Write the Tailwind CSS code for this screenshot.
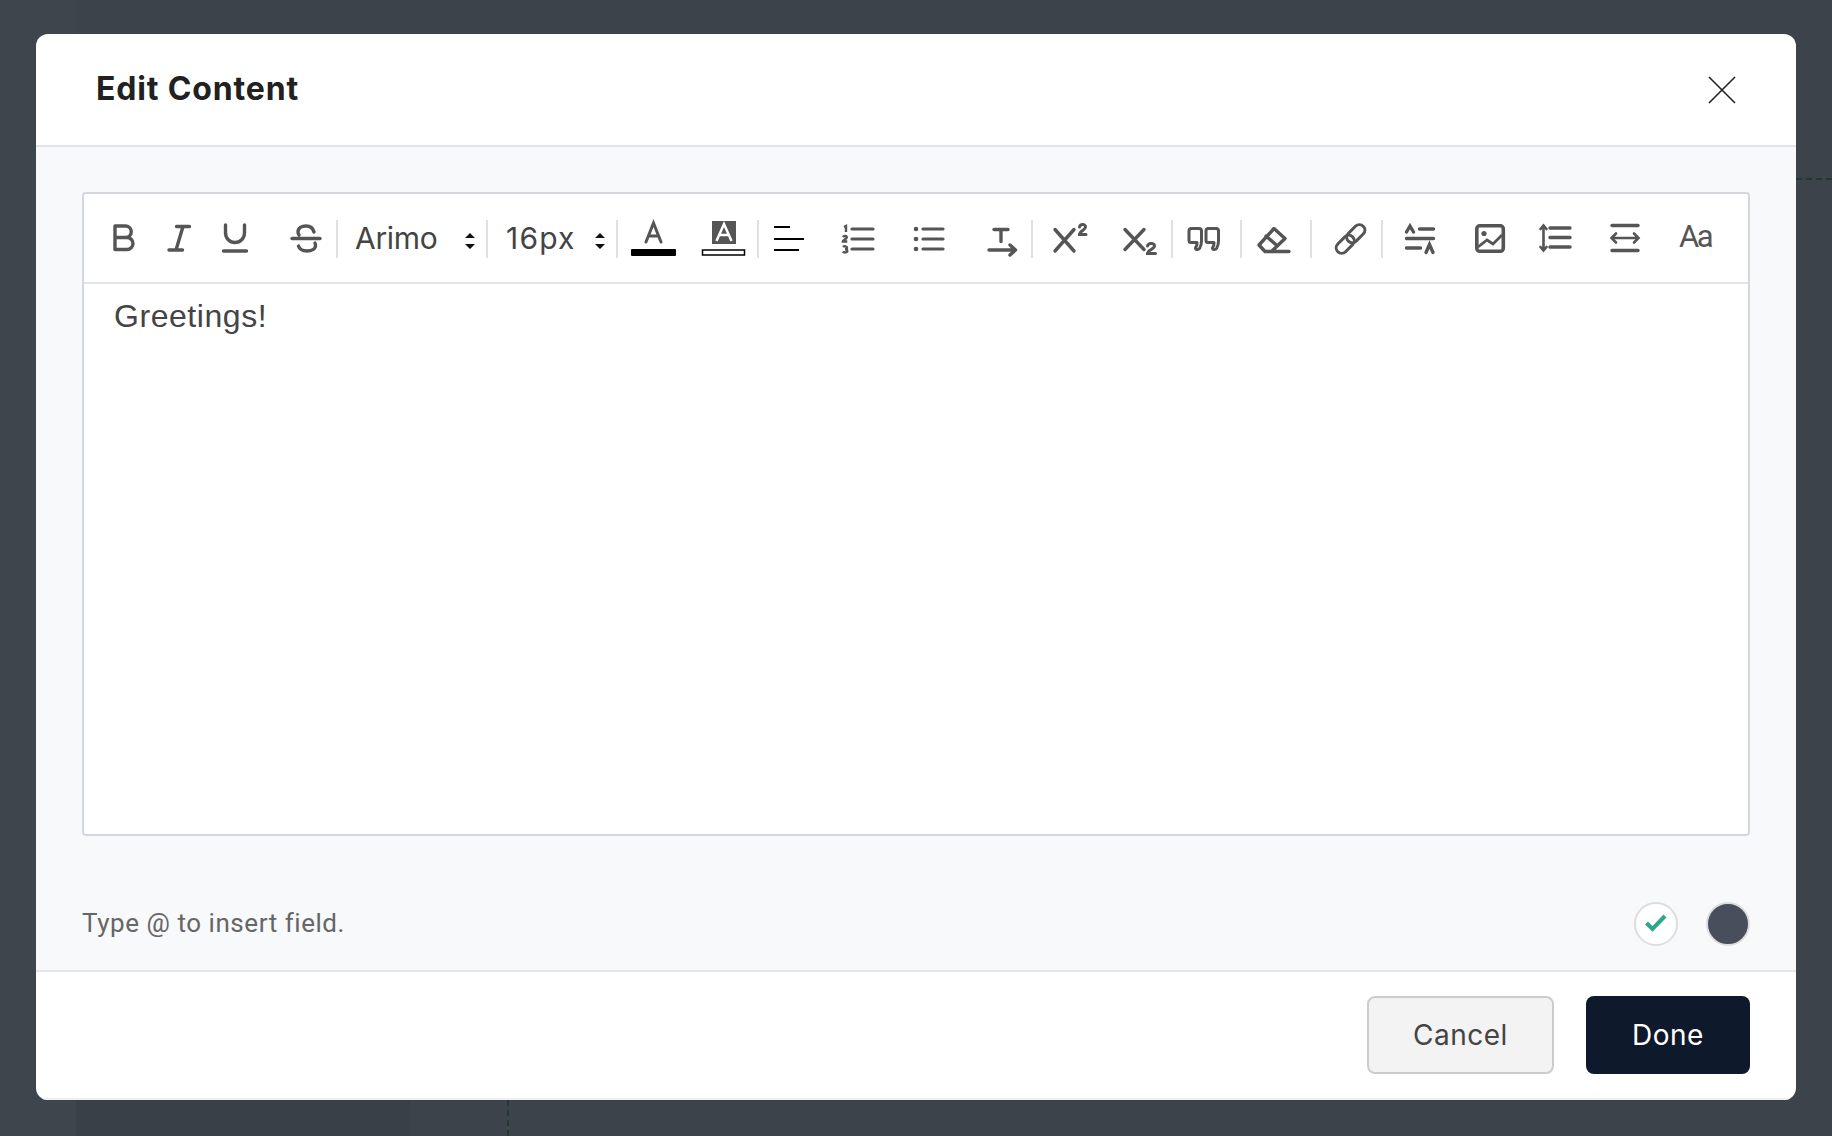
<!DOCTYPE html>
<html lang="en">
<head>
    <meta charset="UTF-8">
    <title>Edit Content</title>
    <script src="https://cdn.jsdelivr.net/npm/@tailwindcss/browser@4"></script>
</head>
<body class="relative w-[1832px] h-[1136px] overflow-hidden bg-[#3c434a] font-['Inter',sans-serif]">

    <!-- page behind the dialog -->
    <div class="flex h-full">
        <div class="w-[76px] bg-[#3d464d]"></div>
        <div class="flex-1 flex flex-col">
            <div class="h-[180px] border-b-2 border-dashed border-[#1f3a30]"></div>
            <div class="flex-1 flex">
                <div class="w-[334px] bg-[#3a4048]"></div>
                <div class="w-0 border-l-2 border-dashed border-[#1f3a30] mt-[920px] ml-[97px]"></div>
            </div>
        </div>
    </div>

    <!-- dialog -->
    <div class="absolute left-[36px] top-[34px] w-[1760px] h-[1066px] bg-white rounded-xl overflow-hidden flex flex-col">
        <header class="h-[113px] shrink-0 border-b-2 border-[#e1e3e8] flex items-center justify-between pl-[60px] pr-[60px]">
            <h1 class="text-[32px] font-bold tracking-[0.85px] text-[#212121] -mt-[2px]">Edit Content</h1>
            <button class="block">
                <svg width="28" height="28" viewBox="0 0 28 28" fill="none" stroke="#222" stroke-width="1.6"><path d="M1 1l26 26M27 1L1 27"/></svg>
            </button>
        </header>

        <div class="flex-1 bg-[#f8f9fb] px-[46px] pt-[45px] flex flex-col">
            <div class="h-[644px] bg-white border-2 border-[#d4d7e0] rounded-[4px] flex flex-col">
                <div class="h-[90px] shrink-0 border-b-2 border-[#e3e4e8] flex items-start pt-[20px]">
                    <svg class="ml-[26px]" width="30" height="44" viewBox="110 214 30 44" fill="none" stroke="#555" stroke-width="3.400" stroke-linejoin="round"><path d="M115 226h10.500a5.750 5.750 0 0 1 0 11.500H115zM115 237.500h12a6 6 0 0 1 0 12h-12z"/></svg>
                    <svg class="ml-[24px]" width="28" height="44" viewBox="164 214 28 44" fill="none" stroke="#555" stroke-width="3.400" stroke-linecap="round"><path d="M176.500 226.500h13M169 250h13.500M183 226.500l-7 23.500"/></svg>
                    <svg class="ml-[28px]" width="30" height="44" viewBox="220 214 30 44" fill="none" stroke="#555" stroke-width="3.400" stroke-linecap="round"><path d="M225.500 225v8a9.500 9.500 0 0 0 19 0v-8M223.500 251h23"/></svg>
                    <svg class="ml-[39px]" width="34" height="44" viewBox="289 214 34 44" fill="none" stroke="#555" stroke-width="3.400" stroke-linecap="round"><path d="M292 238.500h28M314 232c-1-4-4-6-8-6-4.500 0-8 2-8 6 0 1 .300 2 1 3M315 243c.500 1 .500 2 .500 2.500 0 3.500-4 5.500-8.500 5.500-4 0-7.500-2-8.500-5"/></svg>
                    <span class="w-[2px] h-[38px] mt-[6px] ml-[13px] bg-[#e0e0e0]"></span>

                    <div class="h-[44px] w-[148px] flex items-center pl-[17px] pt-[4px] text-[30px] leading-none text-[#444]">
                        <span class="w-[110px] tracking-[-0.3px]">Arimo</span>
                        <svg class="mt-[6px] -ml-[1px]" width="12" height="16" viewBox="0 0 12 16" fill="#111"><path d="M6 0l5 5H1zM6 16l-5-5h10z"/></svg>
                    </div>
                    <span class="w-[2px] h-[38px] mt-[6px] bg-[#e0e0e0]"></span>
                    <div class="h-[44px] w-[128px] flex items-center pl-[18px] pt-[4px] text-[30px] leading-none text-[#444]">
                        <span class="w-[88px] tracking-[1.2px]">16px</span>
                        <svg class="mt-[6px]" width="12" height="16" viewBox="0 0 12 16" fill="#111"><path d="M6 0l5 5H1zM6 16l-5-5h10z"/></svg>
                    </div>
                    <span class="w-[2px] h-[38px] mt-[6px] bg-[#e0e0e0]"></span>

                    <svg class="ml-[12px]" width="46" height="44" viewBox="630 214 46 44" fill="none" stroke="#555" stroke-width="3" stroke-linecap="round"><path d="M646 242l7.500-19 7.500 19M648.500 236h10"/><rect x="631" y="249" width="45" height="7" rx="1" fill="#000" stroke="none"/></svg>
                    <svg class="ml-[25px]" width="45" height="44" viewBox="701 214 45 44" fill="none"><rect x="712" y="221" width="24" height="23" fill="#555"/><path d="M716.500 241l7.500-17 7.500 17M719 235h10" stroke="#fff" stroke-width="2.500"/><rect x="702.500" y="250" width="42" height="5" fill="#fff" stroke="#000" stroke-width="1.500"/></svg>
                    <span class="w-[2px] h-[38px] mt-[6px] ml-[11px] bg-[#e0e0e0]"></span>

                    <svg class="ml-[14px]" width="32" height="44" viewBox="773 214 32 44" fill="none" stroke="#000" stroke-width="2.200"><path d="M774 227h16M774 239h30M774 250h25"/></svg>
                    <svg class="ml-[36px]" width="34" height="44" viewBox="841 214 34 44" fill="none" stroke="#555" stroke-width="3.200" stroke-linecap="round"><path d="M852 229h21M852 239h21M852 249h21"/><path d="M844 227l2-1v6M842.800 237c1-1.500 4-1.500 4 .500 0 1.500-4 2.500-4 4h4.500M843 247c1-1 4-1 4 .800 0 1-1 1.500-2 1.500 1 0 2.300.500 2.300 1.700 0 1.800-3.500 1.800-4.500.600" stroke-width="2.400" stroke-linecap="butt"/></svg>
                    <svg class="ml-[38px]" width="32" height="44" viewBox="913 214 32 44" fill="none" stroke="#555" stroke-width="3.200" stroke-linecap="round"><path d="M923 229h20M923 239h20M923 249h20"/><circle cx="916" cy="229" r="2.300" fill="#555" stroke="none"/><circle cx="916" cy="239" r="2.300" fill="#555" stroke="none"/><circle cx="916" cy="249" r="2.300" fill="#555" stroke="none"/></svg>
                    <svg class="ml-[42px]" width="31" height="44" viewBox="987 214 31 44" fill="none" stroke="#555" stroke-width="3.400" stroke-linecap="round" stroke-linejoin="round"><path d="M994 229.500h14M1001 229.500v12M989 250h26M1010 245l5.500 5-5.500 5"/></svg>
                    <span class="w-[2px] h-[38px] mt-[6px] ml-[13px] bg-[#e0e0e0]"></span>

                    <svg class="ml-[19px]" width="36" height="44" viewBox="1052 214 36 44" fill="none" stroke="#555" stroke-width="3.400" stroke-linecap="round"><path d="M1055 229.500l19 21.500M1074 229.500l-19 21.500"/><path d="M1079.500 227c.500-3 6-3.500 6 0 0 3-6 4-6 7.500h6.500" stroke-width="3"/></svg>
                    <svg class="ml-[34px]" width="36" height="44" viewBox="1122 214 36 44" fill="none" stroke="#555" stroke-width="3.400" stroke-linecap="round"><path d="M1125 229.500l19 20M1144 229.500l-19 20"/><path d="M1147.500 246c.500-3 7-3.500 7 0 0 3-7 4-7 7.500h8" stroke-width="3"/></svg>
                    <span class="w-[2px] h-[38px] mt-[6px] ml-[13px] bg-[#e0e0e0]"></span>

                    <svg class="ml-[14px]" width="34" height="44" viewBox="1187 214 34 44" fill="none" stroke="#555" stroke-width="3" stroke-linejoin="round"><path d="M1191 228.500h8a2.500 2.500 0 0 1 2.500 2.500v10c0 3-.500 5-2 7.500-1 1.500-4 1.500-4-.500 0-.500.500-1 1-2 .500-1 .500-2 .500-3.500h-6a2 2 0 0 1-2-2V231a2.500 2.500 0 0 1 2-2.500zM1208 228.500h8a2.500 2.500 0 0 1 2.500 2.500v10c0 3-.500 5-2 7.500-1 1.500-4 1.500-4-.500 0-.500.500-1 1-2 .500-1 .500-2 .500-3.500h-6a2 2 0 0 1-2-2V231a2.500 2.500 0 0 1 2-2.500z"/></svg>
                    <span class="w-[2px] h-[38px] mt-[6px] ml-[19px] bg-[#e0e0e0]"></span>

                    <svg class="ml-[15px]" width="34" height="44" viewBox="1257 214 34 44" fill="none" stroke="#555" stroke-width="3.400" stroke-linecap="round" stroke-linejoin="round"><path d="M1274 228.500l11 10-13.500 13h-6.500l-6-6.500zM1266 236l11.500 10M1271 251.500h18"/></svg>
                    <span class="w-[2px] h-[38px] mt-[6px] ml-[19px] bg-[#e0e0e0]"></span>

                    <svg class="ml-[22px]" width="34" height="44" viewBox="1334 214 34 44" fill="none" stroke="#555" stroke-width="3"><g transform="rotate(-45 1350.500 239)"><rect x="1332.500" y="233.500" width="21" height="11" rx="5.500"/><rect x="1347.500" y="233.500" width="21" height="11" rx="5.500"/></g></svg>
                    <span class="w-[2px] h-[38px] mt-[6px] ml-[13px] bg-[#e0e0e0]"></span>

                    <svg class="ml-[21px]" width="32" height="44" viewBox="1404 214 32 44" fill="none" stroke="#555" stroke-width="3.400" stroke-linecap="round"><path d="M1419.500 229h14M1406.500 238.500h27M1406.500 248h14M1406.500 232l3.500-6 3.500 6M1426 252.500l3.500-8 3.500 8"/></svg>
                    <svg class="ml-[39px]" width="32" height="44" viewBox="1475 214 32 44" fill="none" stroke="#555" stroke-width="3.600"><rect x="1476.800" y="225.800" width="26.500" height="25.500" rx="3" stroke-linejoin="round"/><circle cx="1484" cy="233.500" r="2.600" fill="#555" stroke="none"/><path d="M1478 247l9-7 6 4 9-9" stroke-width="2.800"/></svg>
                    <svg class="ml-[32px]" width="34" height="44" viewBox="1539 214 34 44" fill="none" stroke="#555" stroke-width="3.400" stroke-linecap="round"><path d="M1550 228h20M1550 237.500h20M1550 247h20"/><path d="M1543.500 226v23.500M1540.500 229l3-3.500 3 3.500M1540.500 247l3 3.500 3-3.500" stroke-width="2.600"/></svg>
                    <svg class="ml-[36px]" width="32" height="44" viewBox="1609 214 32 44" fill="none" stroke="#555" stroke-width="3.400" stroke-linecap="round"><path d="M1612 225.500h26M1612 250.500h26"/><path d="M1612 238h26M1616 233.500l-4.500 4.500 4.500 4.500M1634 233.500l4.500 4.500-4.500 4.500" stroke-width="2.600"/></svg>
                    <span class="ml-[38px] h-[44px] flex items-center text-[31px] tracking-[-2.5px] leading-none text-[#555] font-['Roboto',sans-serif]">Aa</span>
                </div>
                <div class="pl-[30px] pt-[10px] text-[32px] leading-[44px] text-[#444] font-['Liberation_Sans',sans-serif] tracking-[0.55px]">Greetings!</div>
            </div>

            <div class="mt-[66px] h-[44px] flex items-center justify-between">
                <span class="text-[26px] tracking-[0.55px] text-[#666] font-['Roboto',sans-serif] -mt-[2px]">Type @ to insert field.</span>
                <div class="flex items-center gap-[28px]">
                    <span class="w-[44px] h-[44px] rounded-full bg-white border-2 border-[#ddd] flex items-center justify-center">
                        <svg class="-mt-[2px]" width="22" height="18" viewBox="0 0 22 18" fill="none" stroke="#2ba888" stroke-width="4"><path d="M1.500 9l6 6L20 2"/></svg>
                    </span>
                    <span class="w-[44px] h-[44px] rounded-full bg-[#484e5c] border-2 border-[#ddd]"></span>
                </div>
            </div>
        </div>

        <footer class="h-[130px] shrink-0 border-t-2 border-[#e5e5e5] flex items-start justify-end gap-[32px] px-[46px] pt-[24px] border-b-2 border-b-[#f0f0f0]">
            <button class="w-[187px] h-[78px] rounded-[8px] border-2 border-[#ccc] bg-[#f3f3f3] text-[28px] tracking-[0.5px] text-[#444]">Cancel</button>
            <button class="w-[164px] h-[78px] rounded-[8px] bg-[#0e1a2b] text-[28px] tracking-[0.5px] text-white">Done</button>
        </footer>
    </div>
</body>
</html>
